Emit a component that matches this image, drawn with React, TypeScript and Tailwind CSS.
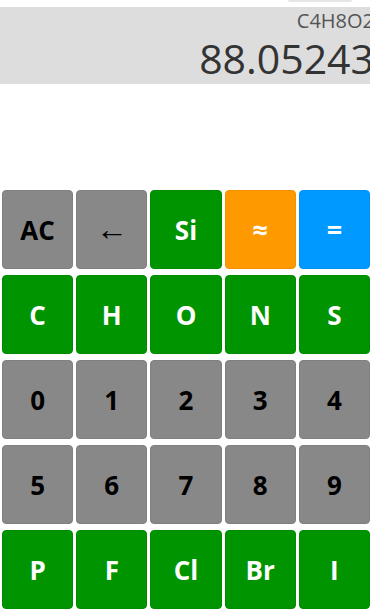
import React from "react";

type Key = { label: string; kind: "gray" | "green" | "orange" | "blue"; thin?: boolean };

const rows: Key[][] = [
  [
    { label: "AC", kind: "gray" },
    { label: "←", kind: "gray", thin: true },
    { label: "Si", kind: "green" },
    { label: "≈", kind: "orange" },
    { label: "=", kind: "blue" },
  ],
  ["C", "H", "O", "N", "S"].map((l) => ({ label: l, kind: "green" as const })),
  ["0", "1", "2", "3", "4"].map((l) => ({ label: l, kind: "gray" as const })),
  ["5", "6", "7", "8", "9"].map((l) => ({ label: l, kind: "gray" as const })),
  ["P", "F", "Cl", "Br", "I"].map((l) => ({ label: l, kind: "green" as const })),
];

function KeyButton({ k }: { k: Key }) {
  const color =
    k.kind === "gray"
      ? "bg-[#888888] text-black border-[#808080]"
      : k.kind === "green"
      ? "bg-[#009400] text-white border-[#008c00]"
      : k.kind === "orange"
      ? "bg-[#ff9900] text-white border-[#f29100]"
      : "bg-[#0099ff] text-white border-[#0092f2]";
  const size = k.thin
    ? "text-[32px] font-normal"
    : k.kind === "orange" || k.kind === "blue"
    ? "text-[27px] font-bold"
    : "text-[26px] font-bold";
  return (
    <div
      className={`h-[79px] rounded-[4px] border flex items-center justify-center leading-none ${color} ${size}`}
    >
      <span className={k.thin ? "-mt-[4px]" : ""}>{k.label}</span>
    </div>
  );
}

export default function App() {
  return (
    <div
      className="w-[370px] h-[611px] bg-white overflow-hidden relative"
      style={{ fontFamily: '"Open Sans", "Noto Sans", sans-serif' }}
    >
      <div className="absolute top-0 left-[288px] w-[64px] h-[2px] rounded-b-[3px] bg-[#e6e6e6]" />
      <div className="pt-[7px]">
        <div className="h-[77px] bg-[#dddddd] flex flex-col items-end overflow-hidden">
          <div className="text-[20px] leading-[22px] text-[#555555] mt-[3px] mr-[-4px]">C4H8O2</div>
          <div className="text-[41px] leading-[44px] text-[#333333] mt-[4px] mr-[-4px]">88.05243</div>
        </div>
      </div>
      <div className="mt-[106px] pl-[2px] grid grid-cols-5 gap-x-[3px] gap-y-[6px]">
        {rows.flat().map((k, i) => (
          <KeyButton key={i} k={k} />
        ))}
      </div>
    </div>
  );
}
